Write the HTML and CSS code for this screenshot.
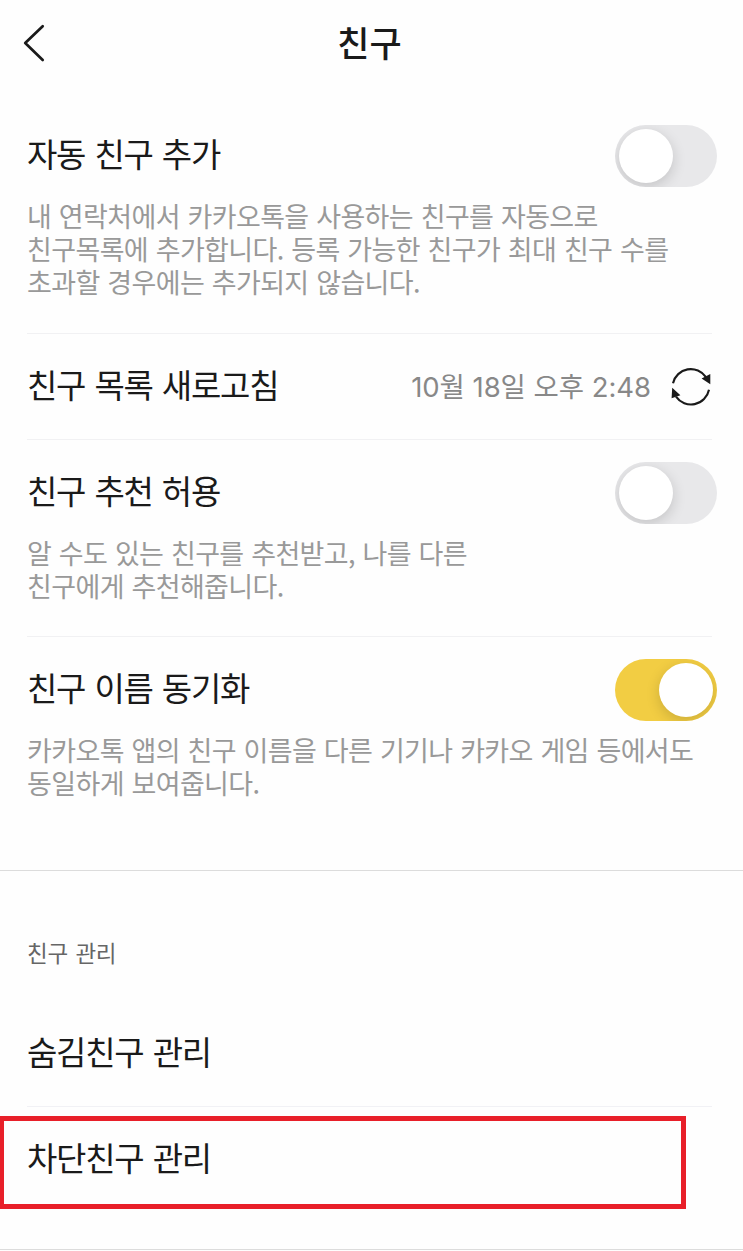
FILE: index.html
```html
<!DOCTYPE html>
<html lang="ko">
<head>
<meta charset="utf-8">
<title>친구</title>
<link rel="stylesheet" href="styles.css">
</head>
<body>
<header class="header">
  <svg class="back" width="24" height="40" viewBox="0 0 24 40" fill="none" stroke="#1a1a1a" stroke-width="2.7" stroke-linecap="round" stroke-linejoin="round"><path d="M21.7 3.2 4.2 20 21.7 37"/></svg>
  <h1 class="title">친구</h1>
</header>
<main>
  <section class="group">
    <div class="item item-auto">
      <div class="row"><h2 class="label">자동 친구 추가</h2><span class="toggle"></span></div>
      <p class="desc">내 연락처에서 카카오톡을 사용하는 친구를 자동으로<br>친구목록에 추가합니다. 등록 가능한 친구가 최대 친구 수를<br>초과할 경우에는 추가되지 않습니다.</p>
    </div>
    <div class="item item-refresh">
      <div class="row">
        <h2 class="label">친구 목록 새로고침</h2>
        <span class="date">10월 18일 오후 2:48</span>
        <svg class="refresh" width="42" height="42" viewBox="0 0 42 42" fill="none" stroke="#1a1a1a" stroke-width="2.1"><path d="M3 17.2A18.3 18.3 0 0 1 36 11.2M39 23.8A18.3 18.3 0 0 1 6 30.6"/><path d="M31.6 12.6 40.3 8V18.2ZM2.2 21.8 10.4 29.2 1.6 32.2Z" fill="#1a1a1a" stroke="none"/></svg>
      </div>
    </div>
    <div class="item item-recommend">
      <div class="row"><h2 class="label">친구 추천 허용</h2><span class="toggle"></span></div>
      <p class="desc">알 수도 있는 친구를 추천받고, 나를 다른<br>친구에게 추천해줍니다.</p>
    </div>
    <div class="item item-sync">
      <div class="row"><h2 class="label">친구 이름 동기화</h2><span class="toggle on"></span></div>
      <p class="desc">카카오톡 앱의 친구 이름을 다른 기기나 카카오 게임 등에서도<br>동일하게 보여줍니다.</p>
    </div>
  </section>
  <section class="manage">
    <h3 class="caption">친구 관리</h3>
    <div class="link hidden-friends"><span class="label">숨김친구 관리</span></div>
    <div class="link blocked-friends"><span class="label">차단친구 관리</span></div>
  </section>
</main>
</body>
</html>
```
FILE: styles.css
```css
* { box-sizing: border-box; }
body {
  margin: 0;
  height: 1251px;
  overflow: hidden;
  background: #fefefe;
  color: #1a1a1a;
  font-family: Inter, "Noto Sans CJK KR", sans-serif;
}
h1, h2, h3, p { margin: 0; font-weight: 400; }
.header {
  display: grid;
  grid-template-columns: 100px 1fr 104px;
  align-items: center;
  height: 86px;
}
.back { margin-left: 21px; }
.title {
  padding-bottom: 3px;
  text-align: center;
  font: 500 35px/48px "Noto Sans CJK KR", sans-serif;
}
.item { margin: 0 31px 0 27px; border-bottom: 1px solid #f1f1f3; }
.item-auto { height: 248px; padding-top: 39px; }
.item-refresh { height: 106px; padding-top: 22px; }
.item-recommend { height: 197px; padding-top: 22px; }
.item-sync { height: 233px; padding-top: 22px; border-bottom: 0; }
.row { display: flex; align-items: center; height: 62px; }
.label {
  flex: 1;
  padding-bottom: 6px;
  font: 400 33px/48px "Noto Sans CJK KR", sans-serif;
  letter-spacing: -1.25px;
  word-spacing: 1.2px;
  white-space: nowrap;
}
.desc {
  margin-top: 12px;
  color: #999;
  font: 400 27px/33px "Noto Sans CJK KR", sans-serif;
  letter-spacing: -0.63px;
  word-spacing: 0.7px;
  white-space: nowrap;
}
.toggle {
  width: 102px;
  height: 62px;
  margin-right: -5px;
  padding: 4px;
  border-radius: 31px;
  background: #e8e8ea;
  overflow: hidden;
}
.toggle::before {
  content: "";
  display: block;
  width: 54px;
  height: 54px;
  border-radius: 50%;
  background: #fff;
  box-shadow: 0 4px 14px rgba(0, 0, 0, .16);
}
.toggle.on { background: #f2cd43; }
.toggle.on::before { margin-left: auto; }
.date {
  padding-bottom: 4px;
  color: #888;
  font-size: 27.5px;
  letter-spacing: -0.05px;
  white-space: nowrap;
}
.refresh { margin-left: 19px; }
.manage {
  height: 380px;
  border-top: 1px solid #dcdcdc;
  border-bottom: 1px solid #dcdcdc;
}
.caption {
  padding: 65px 27px 0;
  color: #666;
  font: 400 22.5px/33px "Noto Sans CJK KR", sans-serif;
  letter-spacing: -0.3px;
  word-spacing: 1.6px;
}
.link { display: flex; align-items: center; }
.hidden-friends {
  height: 106px;
  margin: 32px 31px 0 27px;
  border-bottom: 1px solid #f1f1f5;
}
.blocked-friends {
  width: 686px;
  height: 93px;
  margin-top: 9px;
  padding: 0 0 6px 23px;
  border: 5px solid #e81f29;
  border-left-width: 4px;
}
```
